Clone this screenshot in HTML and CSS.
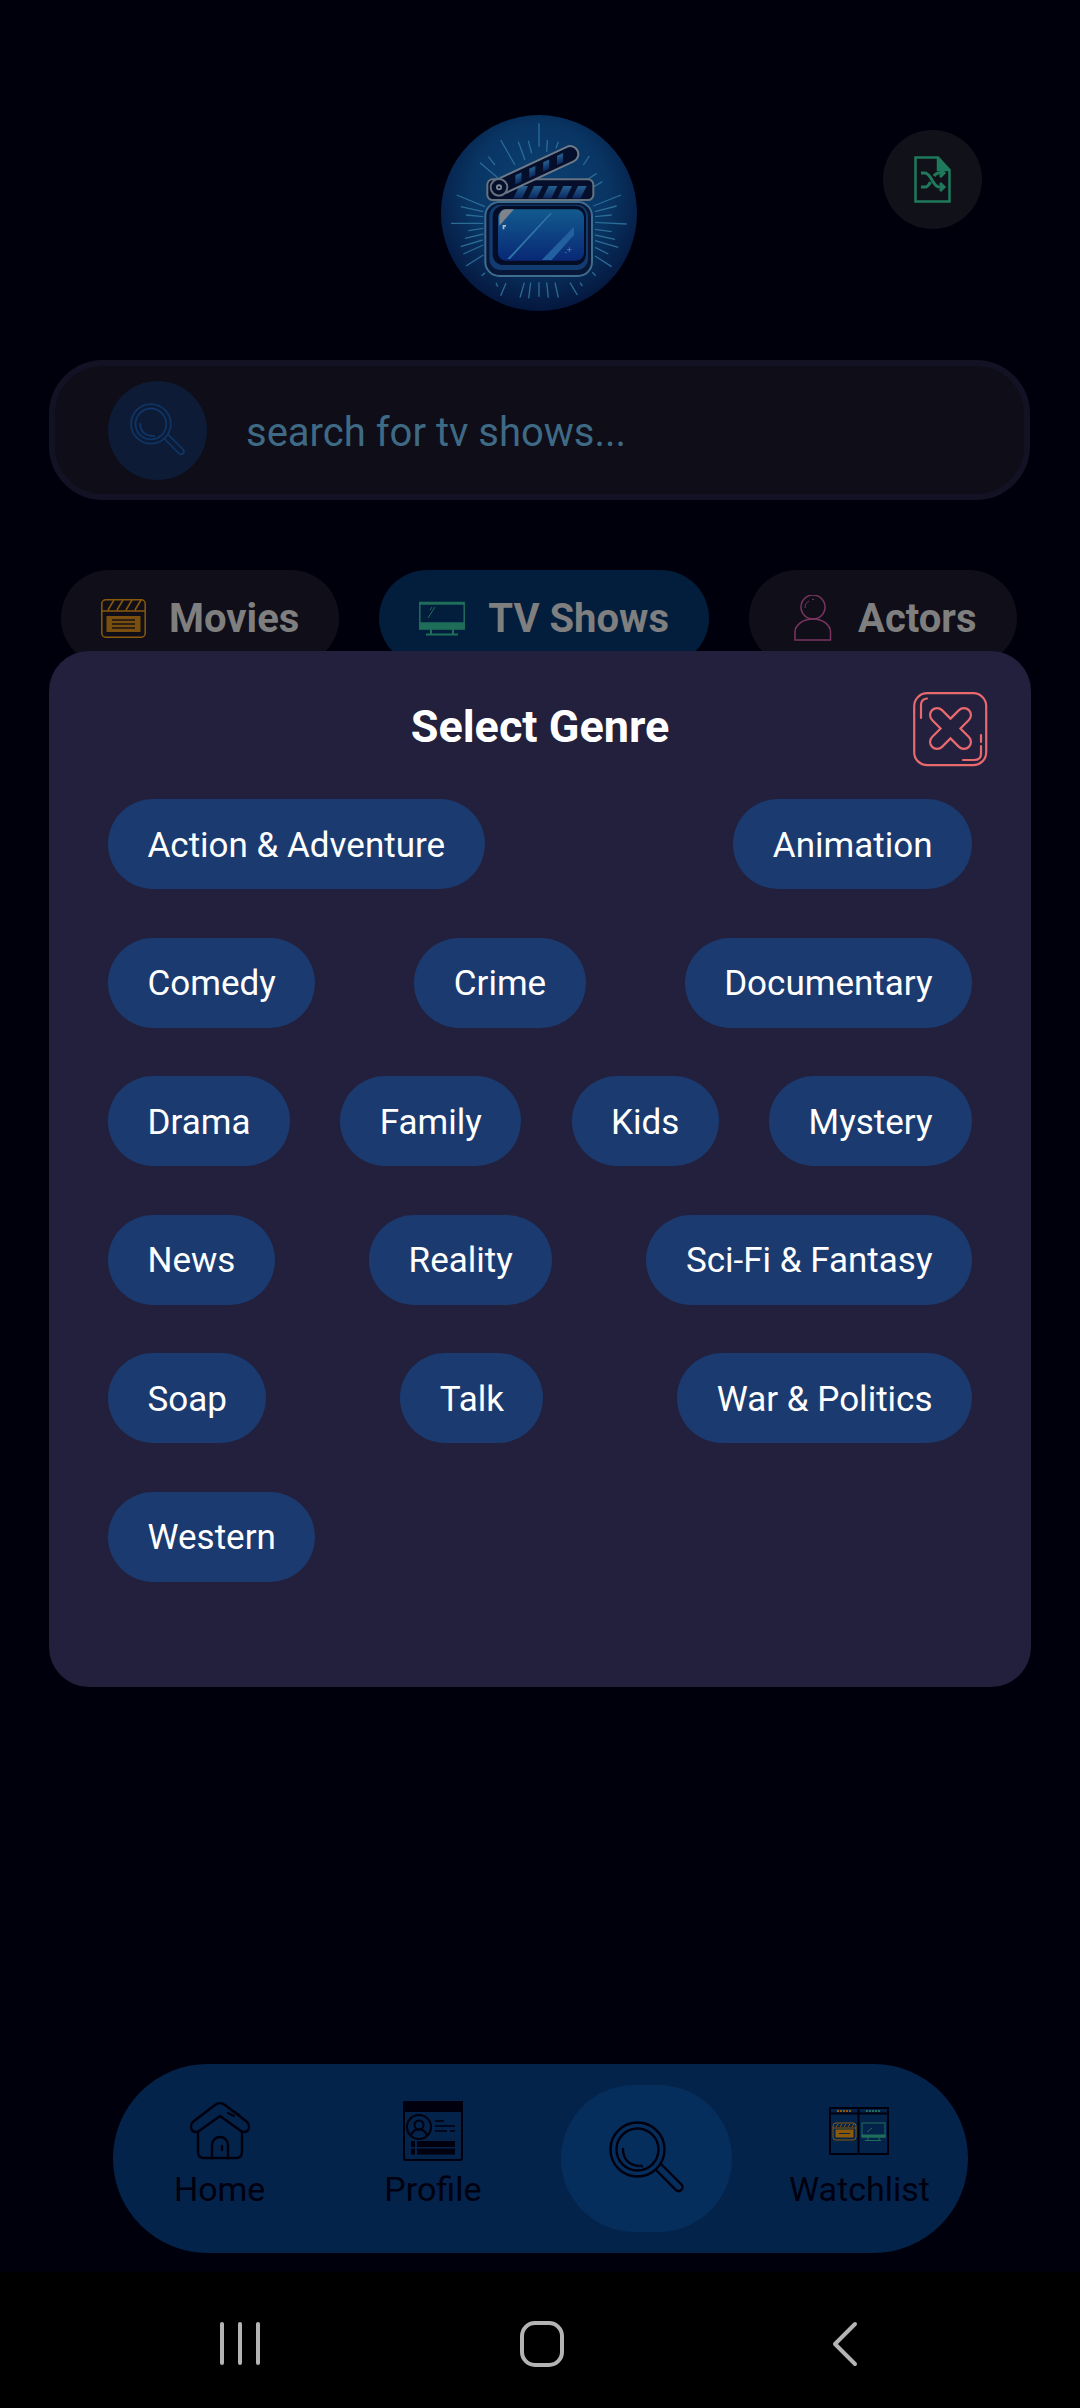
FILE: index.html
```html
<!DOCTYPE html>
<html lang="en">
<head>
<meta charset="utf-8">
<title>Select Genre</title>
<link rel="stylesheet" href="styles.css">
</head>
<body>
<svg class="defs" width="0" height="0" aria-hidden="true">
  <symbol id="lens" viewBox="0 0 75 75">
    <g fill="none" stroke="currentColor" stroke-width="2.4" stroke-linecap="round">
      <circle cx="28.5" cy="28.5" r="27"/>
      <circle cx="28.5" cy="28.5" r="21"/>
      <path d="M14 28c0 10 6 16 16 17M32 44.5l1 1"/>
      <path d="M47 49l20 20a3.900 3.900 0 0 0 5.500-5.500l-20-20"/>
    </g>
  </symbol>
</svg>
<div class="app">
  <main class="screen">
    <header class="top">
      <span></span>
      <svg class="logo" viewBox="33 15 588 588" aria-label="logo">
        <defs>
          <radialGradient id="lg" cx="50%" cy="40%" r="64%">
            <stop offset="0" stop-color="#0b4274"/>
            <stop offset=".55" stop-color="#093563"/>
            <stop offset="1" stop-color="#041238"/>
          </radialGradient>
          <linearGradient id="sc" x1="0" y1="0" x2="0" y2="1">
            <stop offset="0" stop-color="#125a8e"/>
            <stop offset="1" stop-color="#092876"/>
          </linearGradient>
          <linearGradient id="st" x1="0" y1="0" x2="0" y2="1">
            <stop offset="0" stop-color="#25608f"/>
            <stop offset="1" stop-color="#0b2860"/>
          </linearGradient>
        </defs>
        <circle cx="327" cy="309" r="294" fill="url(#lg)"/>
        <path class="rays" d="M327 40V110M212 90L255 165M265 95L285 150M295 92L305 130M352 90L350 125M385 95L378 115M150 158L205 205M175 140L195 165M80 255L165 290M92 290L160 305M108 315L160 320M63 340L160 340M115 362L160 355M105 385L160 372M92 410L158 390M100 432L160 405M108 468L160 435M155 497L165 488M573 255L490 288M560 288L495 305M545 315L495 320M590 342L495 337M545 365L495 358M555 388L495 375M565 412L495 392M535 432L495 412M545 470L495 438M497 497L487 487M517 215L492 230M500 190L470 210M478 138L460 165M198 518L203 530M228 520L212 557M283 518L270 563M302 518L296 565M327 517L327 560M350 517L355 563M375 518L385 563M420 518L442 555M450 518L457 528"/>
        <rect x="172" y="208" width="318" height="62" rx="16" fill="#050f2c" stroke="#66727f" stroke-width="6"/>
        <g fill="url(#st)">
          <path d="M268 228h26l-18 37h-26zM312 228h26l-18 37h-26zM356 228h26l-18 37h-26zM400 228h26l-18 37h-26zM444 228h26l-18 37h-26z"/>
        </g>
        <g transform="translate(207 232) rotate(-25)">
          <rect x="-8" y="-24" width="268" height="48" rx="24" fill="#050f2c" stroke="#6e7a88" stroke-width="6"/>
          <path d="M48 13l12-25h20l-12 25zM94 13l12-25h20l-12 25zM140 13l12-25h20l-12 25zM186 13l12-25h20l-12 25z" fill="url(#st)"/>
        </g>
        <circle cx="207" cy="232" r="25" fill="#050f2c" stroke="#66727f" stroke-width="6"/>
        <circle cx="207" cy="232" r="9" fill="#7f8c9a"/>
        <circle cx="207" cy="232" r="3.500" fill="#050f2c"/>
        <rect x="166" y="276" width="320" height="222" rx="42" fill="#081637" stroke="#3f6d8e" stroke-width="6"/>
        <rect x="178" y="284" width="296" height="196" rx="34" fill="#123c70"/>
        <rect x="188" y="287" width="280" height="178" rx="32" fill="#040c26"/>
        <rect x="204" y="298" width="258" height="154" rx="24" fill="url(#sc)"/>
        <path d="M228 298H252L208 347V322C208 308 216 298 228 298Z" fill="#7f838c"/>
        <path d="M360 310H366L240 447H232Z" fill="#2f76a8"/>
        <path d="M432 350V375L365 450H335Z" fill="#23609f"/>
        <path d="M218 345h10v5h-5v8h-5z" fill="#b4bac2"/>
        <path d="M418 412v14M411 419h14M405 428h5" stroke="#5f8eb2" stroke-width="2"/>
      </svg>
      <button class="shuffle" type="button" aria-label="Random">
        <svg width="37" height="47" viewBox="0 0 37 47" fill="none" stroke="#1f7a5c" stroke-width="2.500">
          <path d="M1.500 1.500H24L35.500 14V45.500H1.500Z"/>
          <path d="M24 1.500V14H35.500" fill="#1f7a5c"/>
          <path stroke-width="3" d="M7 17h4c6 0 8 14 14 14h4M7 31h4c2.500 0 4-2 5.500-5M20 20c1.500-2 3-3 5-3h4M26 13l4 4-4 4M26 27l4 4-4 4"/>
        </svg>
      </button>
    </header>

    <div class="search">
      <span class="search-btn"><svg class="lens-sm" viewBox="0 0 75 75"><use href="#lens"/></svg></span>
      <span class="placeholder">search for tv shows...</span>
    </div>

    <nav class="tabs">
      <div class="tab">
        <svg width="45" height="39" viewBox="0 0 45 39" fill="none" stroke="#8a5a0a" stroke-width="1.500">
          <rect x=".8" y=".8" width="43.400" height="37.400" rx="4"/>
          <path d="M1 12H44M7 11l6-10M16 11l6-10M25 11l6-10M34 11l6-10"/>
          <rect x="5.500" y="17" width="34" height="16" fill="#7a4e0c" stroke="none"/>
          <path d="M11 21H34M11 25H34M11 29H34" stroke="#17121a"/>
        </svg>
        <span>Movies</span>
      </div>
      <div class="tab active">
        <svg width="46" height="35" viewBox="0 0 46 35" fill="none" stroke="#1f6e5a" stroke-width="1.500">
          <rect x=".8" y="1.500" width="44.400" height="26"/>
          <path d="M1 2.500H45" stroke-width="2.500"/>
          <rect x=".8" y="22" width="44.400" height="6" fill="#1f6e5a"/>
          <path d="M12 28V33M34 28V33M7 33.500H39" stroke-width="2"/>
          <path d="M9 17l7-11M11 9l2-3" stroke-width="1"/>
        </svg>
        <span>TV Shows</span>
      </div>
      <div class="tab">
        <svg class="actor-icon" width="38" height="46" viewBox="0 0 38 46" fill="none" stroke="#7a3460" stroke-width="1.500">
          <circle cx="19" cy="12" r="12"/>
          <path d="M1 45V37C1 30 9 24 19 24S36.500 30 36.500 37V45Z"/>
          <path d="M11 13c0-4 2-6 4-7M18 4.500h2" stroke-width="1"/>
        </svg>
        <span>Actors</span>
      </div>
    </nav>

    <section class="modal">
      <div class="modal-head">
        <span></span>
        <h2>Select Genre</h2>
        <svg class="close" width="75" height="75" viewBox="0 0 75 75" fill="none" stroke="#e8696e" stroke-width="2.200" stroke-linecap="round">
          <rect x="1.200" y="1.200" width="72" height="72" rx="13"/>
          <path d="M8 26V13C8 9 10 7 14 6.500"/>
          <path d="M68 43V50M68 54V62C68 66 65 68 61 68H50"/>
          <path transform="translate(37.500 36.500) rotate(45)" d="M-7-7V-19a7 7 0 0 1 14 0V-7H19a7 7 0 0 1 0 14H7V19a7 7 0 0 1-14 0V7H-19a7 7 0 0 1 0-14Z"/>
        </svg>
      </div>
      <div class="genres">
        <button class="pill" type="button">Action &amp; Adventure</button>
        <button class="pill" type="button">Animation</button>
        <button class="pill" type="button">Comedy</button>
        <button class="pill" type="button">Crime</button>
        <button class="pill" type="button">Documentary</button>
        <button class="pill" type="button">Drama</button>
        <button class="pill" type="button">Family</button>
        <button class="pill" type="button">Kids</button>
        <button class="pill" type="button">Mystery</button>
        <button class="pill" type="button">News</button>
        <button class="pill" type="button">Reality</button>
        <button class="pill" type="button">Sci-Fi &amp; Fantasy</button>
        <button class="pill" type="button">Soap</button>
        <button class="pill" type="button">Talk</button>
        <button class="pill" type="button">War &amp; Politics</button>
        <button class="pill" type="button">Western</button>
      </div>
    </section>

    <nav class="bottom">
      <div class="bottom-item">
        <svg class="nav-icon" width="60" height="60" viewBox="0 0 60 60" fill="none" stroke="#00000f" stroke-width="2.400" stroke-linejoin="round" stroke-linecap="round">
          <path d="M25 4L4 20C0 23 .5 27 2 29C4 32 7 31 9 30L30 15L51 30C53 31 56 32 58 29C59.500 27 60 23 56 20L35 4C32 1.500 28 1.500 25 4Z"/>
          <path d="M8 31V51C8 55 10 57 14 57H46C50 57 52 55 52 51V31"/>
          <path d="M22 57V44C22 39 26 36 30 36S38 39 38 44V57"/>
          <path d="M32 45V49M38 12L44 15M43 10L49 14"/>
        </svg>
        <span>Home</span>
      </div>
      <div class="bottom-item">
        <svg class="nav-icon" width="60" height="60" viewBox="0 0 60 60" fill="none" stroke="#00000f" stroke-width="2">
          <rect x="1" y="1" width="58" height="58" rx="2"/>
          <rect x="1" y="1" width="58" height="9" fill="#00000f"/>
          <circle cx="16" cy="26" r="12"/>
          <circle cx="16" cy="24" r="4.500"/>
          <path d="M8 35c1-5 4-6.500 8-6.500s7 1.500 8 6.500"/>
          <path d="M32 20H41M32 25H52M32 30H44M47 30H52" stroke-width="1.500"/>
          <path d="M8 40h4v6H8zM14 40h38v6H14zM8 47.500h4v6H8zM14 47.500h38v6H14z" fill="#00000f" stroke="none"/>
        </svg>
        <span>Profile</span>
      </div>
      <div class="bottom-item current">
        <span class="current-bg"><svg class="lens-lg" viewBox="0 0 75 75"><use href="#lens"/></svg></span>
      </div>
      <div class="bottom-item">
        <svg class="nav-icon wl" width="60" height="48" viewBox="0 0 60 48" fill="none" stroke="#00000f" stroke-width="2">
          <rect x="1" y="1" width="58" height="46"/>
          <path d="M29.500 1V47M1 6.500H59"/>
          <path d="M8 4H22" stroke="#8a5a0a" stroke-width="2" stroke-dasharray="2 1"/>
          <path d="M37 4H52" stroke="#1f6e5a" stroke-width="2" stroke-dasharray="2 1"/>
          <g stroke="#8a5a0a" stroke-width="1">
            <rect x="4" y="16" width="23" height="17" rx="3"/>
            <path d="M4 21H27M7 20l2-3M11 20l2-3M15 20l2-3M19 20l2-3M23 20l2-3"/>
            <rect x="7" y="23" width="17" height="7" fill="#8a5a0a"/>
            <path d="M10 26.500H21" stroke="#04234a"/>
          </g>
          <g stroke="#1f6e5a" stroke-width="1">
            <rect x="33" y="16" width="23" height="14"/>
            <rect x="33" y="28" width="23" height="2" fill="#1f6e5a"/>
            <path d="M39 30V33M50 30V33M36 33.500H52M38 25l5-4"/>
          </g>
        </svg>
        <span>Watchlist</span>
      </div>
    </nav>
  </main>

  <footer class="sysbar">
    <svg width="60" height="46" viewBox="0 0 60 46" fill="none" stroke="#b4b4b4" stroke-width="4" stroke-linecap="round"><path d="M12 3V42M30 3V42M48 3V42"/></svg>
    <svg width="60" height="46" viewBox="0 0 60 46" fill="none" stroke="#b4b4b4" stroke-width="4"><rect x="10" y="2" width="40" height="42" rx="13"/></svg>
    <svg width="60" height="46" viewBox="0 0 60 46" fill="none" stroke="#b4b4b4" stroke-width="4" stroke-linecap="round" stroke-linejoin="round"><path d="M41 3L21 23L41 43"/></svg>
  </footer>
</div>
</body>
</html>
```

FILE: styles.css
```css
* { box-sizing: border-box; }

html, body {
  margin: 0;
  padding: 0;
  background: #000;
}

body {
  font-family: Roboto, "Liberation Sans", sans-serif;
}

.defs {
  position: absolute;
}

.app {
  display: flex;
  flex-direction: column;
  width: 1080px;
  height: 2408px;
  overflow: hidden;
}

.screen {
  position: relative;
  flex: 1;
  display: flex;
  flex-direction: column;
  background: #00000c;
}

.top {
  display: grid;
  grid-template-columns: 1fr 196px 1fr;
  padding: 115px 2px 0 0;
}

.logo {
  display: block;
  width: 196px;
  height: 196px;
}

.rays {
  fill: none;
  stroke: #2b6b96;
  stroke-width: 4;
}

.shuffle {
  justify-self: end;
  display: flex;
  align-items: center;
  justify-content: center;
  width: 99px;
  height: 99px;
  margin: 15px 96px 0 0;
  padding: 0;
  border: 0;
  border-radius: 50%;
  background: #11111a;
}

.search {
  display: flex;
  align-items: center;
  gap: 39px;
  height: 140px;
  margin: 49px 50px 0 49px;
  padding-left: 53px;
  border: 6px solid #121224;
  border-radius: 54px;
  background: #0e0d18;
}

.search-btn {
  display: flex;
  align-items: center;
  justify-content: center;
  width: 99px;
  height: 99px;
  border-radius: 50%;
  background: #0d1b36;
  color: #0e3566;
}

.lens-sm {
  display: block;
  width: 55px;
  height: 55px;
}

.placeholder {
  padding-top: 4px;
  font-size: 40px;
  color: #3e6a85;
}

.tabs {
  display: flex;
  gap: 40px;
  margin: 70px 0 0 61px;
}

.tab {
  display: flex;
  align-items: center;
  gap: 23px;
  height: 96px;
  padding: 0 40px;
  border-radius: 48px;
  background: #100f19;
  font-size: 40px;
  font-weight: 700;
  color: #7f7f7f;
}

.tab.active {
  background: #021e3c;
}

.actor-icon {
  margin: 0 3px 0 5px;
}

.modal {
  position: absolute;
  left: 49px;
  top: 651px;
  width: 982px;
  padding: 41px 59px 105px;
  border-radius: 40px;
  background: #22203c;
}

.modal-head {
  display: grid;
  grid-template-columns: 1fr auto 1fr;
  align-items: center;
  height: 75px;
  margin-bottom: 32px;
}

.modal-head h2 {
  margin: -6px 0 0;
  font-size: 45px;
  font-weight: 700;
  color: #fff;
}

.close {
  justify-self: end;
  margin-right: -16px;
}

.genres {
  display: flex;
  flex-wrap: wrap;
  justify-content: space-between;
  gap: 48.6px 48px;
}

.pill {
  height: 90px;
  padding: 2px 39.5px 0;
  border: 0;
  border-radius: 45px;
  background: #1b3a70;
  font-family: inherit;
  font-size: 35px;
  color: #fff;
}

.bottom {
  display: grid;
  grid-template-columns: repeat(4, 1fr);
  height: 189px;
  margin: auto 112px 19px 113px;
  padding-right: 2px;
  border-radius: 95px;
  background: #04234a;
}

.bottom-item {
  display: flex;
  flex-direction: column;
  align-items: center;
  padding-top: 37px;
  font-size: 34px;
  line-height: 46px;
  color: #00000f;
}

.nav-icon {
  display: block;
  margin-bottom: 5px;
}

.nav-icon.wl {
  margin: 6px 0 11px;
}

.current {
  padding-top: 21px;
}

.current-bg {
  display: flex;
  align-items: center;
  justify-content: center;
  width: 171px;
  height: 147px;
  border-radius: 80px;
  background: #062e5c;
  color: #00000f;
}

.lens-lg {
  display: block;
  width: 75px;
  height: 75px;
}

.sysbar {
  display: flex;
  gap: 242px;
  height: 136px;
  padding: 49px 0 0 210px;
  background: #000;
}
```
